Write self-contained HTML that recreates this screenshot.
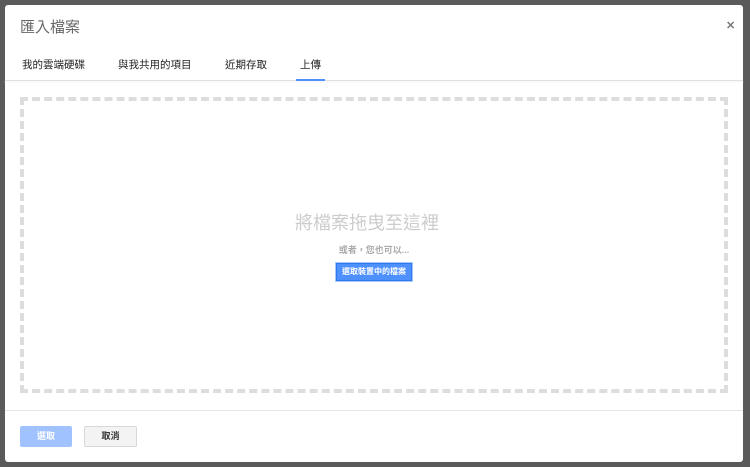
<!DOCTYPE html>
<html><head><meta charset="utf-8"><style>
body{margin:0;width:750px;height:467px;background:#5a5a5a;position:relative;overflow:hidden;font-family:"Liberation Sans","Noto Sans CJK TC",sans-serif}
.dlg{position:absolute;left:5px;top:5px;width:738px;height:457px;background:#fff;border-radius:3px;}
.title{position:absolute;left:15px;top:11px;font-size:15px;color:#666}
.x{position:absolute;left:721px;top:14px;font-size:11px;color:#777;font-weight:bold}
.tab{position:absolute;top:52px;font-size:10.5px;color:#222}
.sep{position:absolute;left:0;top:75px;width:738px;height:1px;background:#e0e0e0;box-shadow:0 1px 2px #eee}
.ul{position:absolute;left:291px;top:74px;width:29px;height:2px;background:#4d90fe}
.drop{position:absolute;left:15px;top:92px;width:700px;height:288px;border:4px dashed #ddd}
.big{position:absolute;left:-7px;width:100%;top:108px;text-align:center;font-size:18px;color:#ccc}
.or{position:absolute;left:0;width:100%;top:142px;text-align:center;font-size:9px;color:#aaa;font-weight:bold}
.pick{position:absolute;left:312px;top:162px;width:74px;height:16px;background:#4d90fe;border:1px solid #3079ed;outline:1px solid #a9c8fa;color:#fff;font-size:8px;font-weight:bold;text-align:center;line-height:16px}
.fsep{position:absolute;left:0;top:405px;width:738px;height:1px;background:#e5e5e5}
.b1{position:absolute;left:15px;top:421px;width:52px;height:21px;background:#a0c3ff;border-radius:2px;color:#fff;font-size:9px;text-align:center;line-height:21px;font-weight:bold}
.b2{position:absolute;left:79px;top:421px;width:51px;height:19px;background:#f3f3f3;border:1px solid #d8d8d8;border-radius:2px;color:#333;font-size:9px;text-align:center;line-height:19px;font-weight:bold}
</style></head><body>
<div class="dlg">
<div class="title">匯入檔案</div>
<div class="x">✕</div>
<div class="tab" style="left:17px">我的雲端硬碟</div>
<div class="tab" style="left:113px">與我共用的項目</div>
<div class="tab" style="left:220px">近期存取</div>
<div class="tab" style="left:295px">上傳</div>
<div class="sep"></div><div class="ul"></div>
<div class="drop">
<div class="big">將檔案拖曳至這裡</div>
<div class="or">或者，您也可以...</div>
<div class="pick">選取裝置中的檔案</div>
</div>
<div class="fsep"></div>
<div class="b1">選取</div>
<div class="b2">取消</div>
</div>
</body></html>
